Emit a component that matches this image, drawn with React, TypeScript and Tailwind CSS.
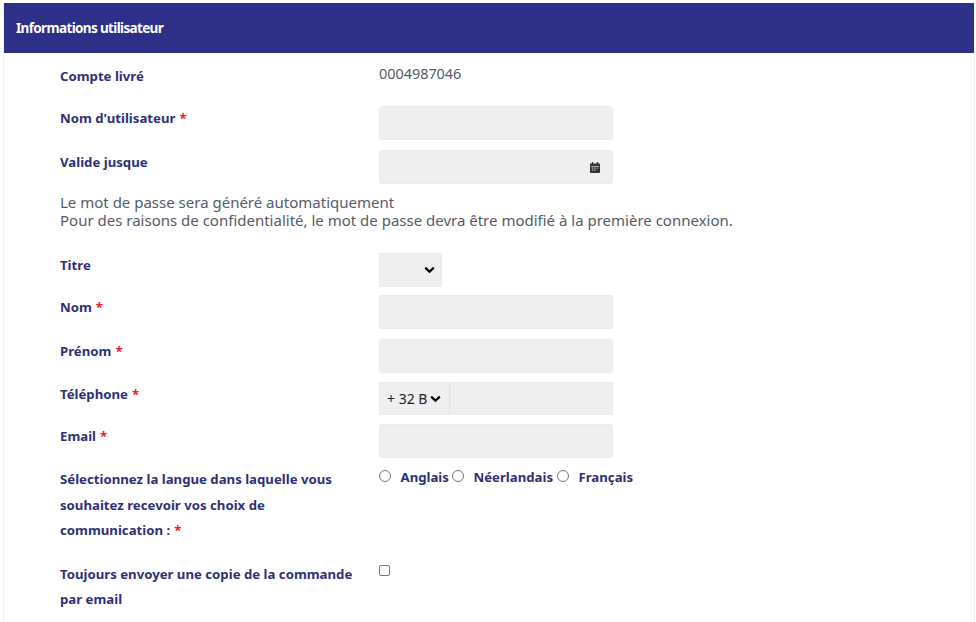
import { FC, ReactNode } from "react";

const Label: FC<{ children: ReactNode; required?: boolean; className?: string }> = ({
  children,
  required,
  className = "",
}) => (
  <div className={`w-[319px] shrink-0 pr-6 text-[13.2px] font-bold text-[#303174] ${className}`}>
    {children}
    {required && <span className="ml-[4px] inline-block text-[#ee1c25]">*</span>}
  </div>
);

const Field = () => (
  <div className="h-[34px] w-[234px] rounded-[3px] border border-[#ebebeb] bg-[#efefef]" />
);

const Chevron = () => (
  <svg width="11" height="8" viewBox="0 0 11 8" className="shrink-0">
    <path d="M1.2 1.6 5.5 5.8 9.8 1.6" fill="none" stroke="#000" strokeWidth="2.2" />
  </svg>
);

const CalendarIcon = () => (
  <svg width="10" height="11" viewBox="0 0 11 12">
    <path
      d="M2 0h1.5v1.5h4V0H9v1.5h1.2c.4 0 .8.4.8.8v8.9c0 .4-.4.8-.8.8H.8c-.4 0-.8-.4-.8-.8V2.3c0-.4.4-.8.8-.8H2z"
      fill="#333"
    />
    <path d="M1 4.5h9v.7H1z" fill="#efefef" />
    <path d="M2 6h1.5v1.3H2zM4.7 6h1.5v1.3H4.7zM7.4 6h1.5v1.3H7.4zM2 8.3h1.5v1.3H2zM4.7 8.3h1.5v1.3H4.7z" fill="#bbb" />
  </svg>
);

const Radio: FC<{ label: string }> = ({ label }) => (
  <div className="flex items-center">
    <span className="mb-[4px] h-[12px] w-[12px] rounded-full border border-[#767676] bg-white" />
    <span className="ml-[9.5px] text-[13.2px] font-bold text-[#303174]">{label}</span>
  </div>
);

export default function App() {
  return (
    <div className="min-h-[622px] bg-white pt-[3px] pl-[3px] pr-px font-['Noto_Sans',sans-serif]">
      <div className="h-[619px] overflow-hidden border-x border-[#f0f0f0]">
        <div className="flex h-[50px] items-center bg-[#2e3087] pl-3 text-[13.5px] font-bold tracking-[-0.65px] text-white">
          Informations utilisateur
        </div>

        <div className="pl-[56px]">
          <div className="mt-[14px] flex h-[18px] items-start">
            <Label>Compte livré</Label>
            <div className="-mt-[4px] text-[14.4px] text-[#555b66]">0004987046</div>
          </div>

          <div className="mt-[21px] flex">
            <Label className="pt-[3px]" required>
              Nom d'utilisateur
            </Label>
            <Field />
          </div>

          <div className="mt-[10px] flex">
            <Label className="pt-[3px]">Valide jusque</Label>
            <div className="flex h-[34px] w-[234px] items-center justify-end rounded-[3px] border border-[#ebebeb] bg-[#efefef] pr-3">
              <CalendarIcon />
            </div>
          </div>

          <p className="mt-[9px] text-[15px] leading-[18px] text-[#555b66]">
            Le mot de passe sera généré automatiquement
            <br />
            Pour des raisons de confidentialité, le mot de passe devra être modifié à la première connexion.
          </p>

          <div className="mt-[24px] flex">
            <Label className="pt-[3px]">Titre</Label>
            <div className="flex h-[34px] w-[63px] items-center justify-end border border-[#ebebeb] bg-[#efefef] pr-[6px]">
              <Chevron />
            </div>
          </div>

          <div className="mt-[8px] flex">
            <Label className="pt-[3px]" required>
              Nom
            </Label>
            <Field />
          </div>

          <div className="mt-[10px] flex">
            <Label className="pt-[3px]" required>
              Prénom
            </Label>
            <Field />
          </div>

          <div className="mt-[9px] flex">
            <Label className="pt-[3px]" required>
              Téléphone
            </Label>
            <div className="flex h-[33px] w-[234px] border border-[#ebebeb] bg-[#efefef]">
              <div className="flex w-[70px] items-center border-r border-[#e2e2e2] pl-[7px] text-[14px] text-[#222]">
                <span className="whitespace-nowrap">+ 32 B</span>
                <span className="ml-[3px]">
                  <Chevron />
                </span>
              </div>
            </div>
          </div>

          <div className="mt-[9px] flex">
            <Label className="pt-[3px]" required>
              Email
            </Label>
            <Field />
          </div>

          <div className="mt-[9px] flex">
            <Label className="leading-[25.5px]" required>
              Sélectionnez la langue dans laquelle vous souhaitez recevoir vos choix de communication :
            </Label>
            <div className="flex h-[20px] pt-[1px]">
              <Radio label="Anglais" />
              <div className="ml-[3px]">
                <Radio label="Néerlandais" />
              </div>
              <div className="ml-[4px]">
                <Radio label="Français" />
              </div>
            </div>
          </div>

          <div className="mt-[18px] flex">
            <Label className="leading-[25.5px]">Toujours envoyer une copie de la commande par email</Label>
            <span className="mt-[3px] h-[11px] w-[11px] rounded-[2px] border border-[#767676] bg-white" />
          </div>
        </div>
      </div>
    </div>
  );
}
